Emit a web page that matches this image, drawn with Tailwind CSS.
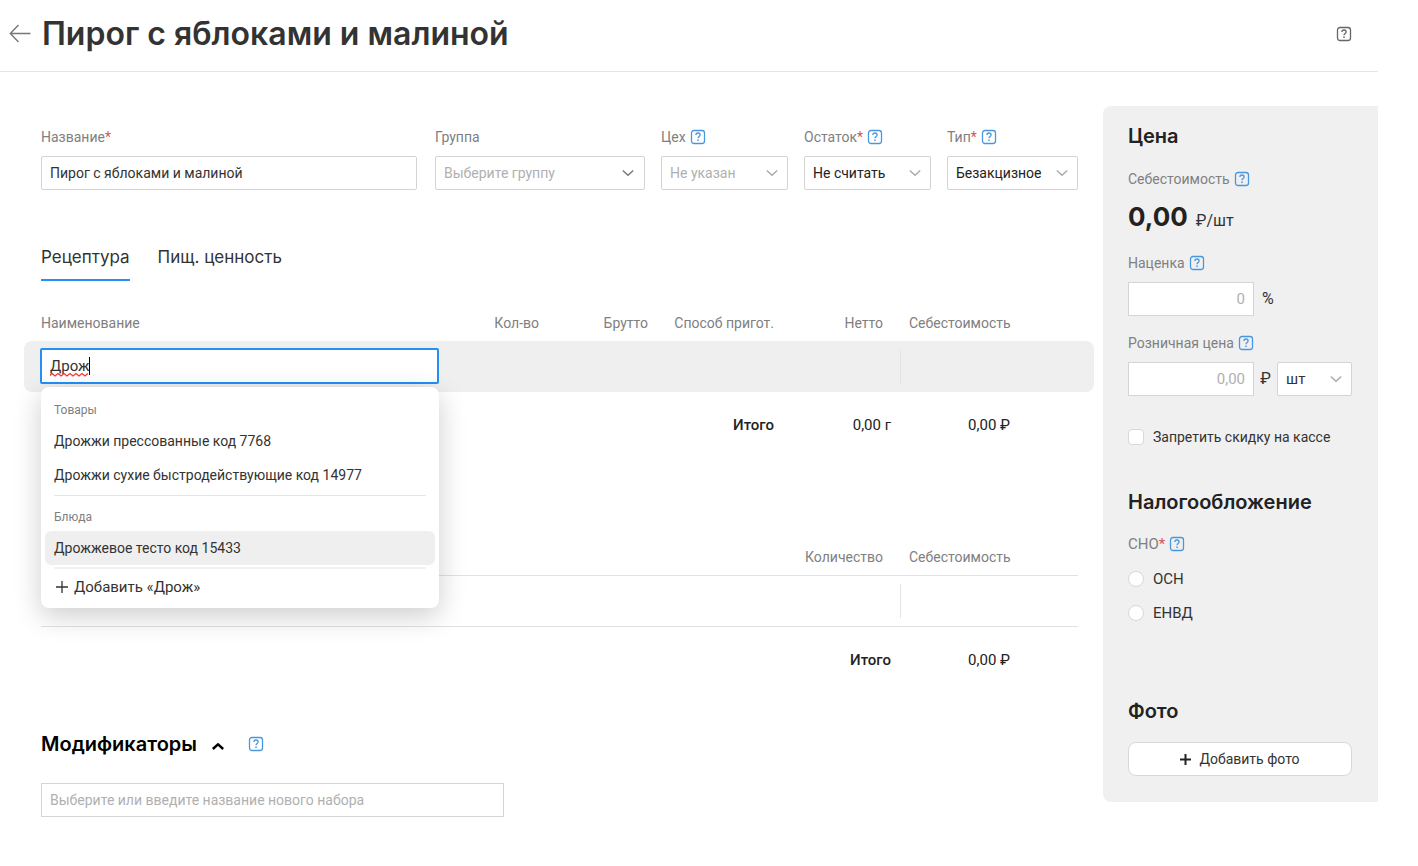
<!DOCTYPE html>
<html lang="ru">
<head>
<meta charset="utf-8">
<meta name="viewport" content="width=device-width, initial-scale=1">
<title>Пирог с яблоками и малиной</title>
<script src="https://cdn.jsdelivr.net/npm/@tailwindcss/browser@4"></script>
</head>
<body class="bg-white font-['Roboto',sans-serif] text-[14px] leading-5 text-[#333]">
<svg class="hidden">
  <symbol id="help" viewBox="0 0 16 16" fill="none" stroke="currentColor">
    <rect x="1.5" y="1.500" width="13" height="13" rx="2.500" stroke-width="1.300"/>
    <path d="M5.900 6C5.900 4.600 6.800 4 8 4s2.100.700 2.100 1.900c0 1.500-2.100 1.600-2.100 3.300" stroke-width="1.300"/>
    <path d="M8 10.600v1.500" stroke-width="1.500"/>
  </symbol>
  <symbol id="chevron" viewBox="0 0 12 8" fill="none" stroke="currentColor" stroke-width="1.500">
    <path d="M.8 1.500 6 6.200l5.200-4.700"/>
  </symbol>
</svg>

<div class="pr-10">
  <header class="flex h-[72px] items-center border-b border-[#e4e4e4] pr-[26px] pb-1 pl-[9px]">
    <button type="button" aria-label="Назад" class="mr-[11px] text-[#777]">
      <svg class="block h-5 w-[22px]" viewBox="0 0 22 20" fill="none" stroke="currentColor" stroke-width="1.400"><path d="M21.500 9.500H1.500M9.500 1 1.300 9.500l8.200 8.500"/></svg>
    </button>
    <h1 class="flex-1 font-['Inter',sans-serif] text-[32px] leading-10 font-semibold text-[#333]">Пирог с яблоками и малиной</h1>
    <button type="button" aria-label="Справка" class="text-[#666]"><svg class="block size-4"><use href="#help"/></svg></button>
  </header>

  <main class="flex items-start pt-[34px]">
    <div class="min-w-0 flex-1 pt-[21px] pr-[25px] pl-[41px]">
      <div class="flex gap-4">
        <div class="mr-[2px] flex-1">
          <label for="name" class="block text-[#808080]">Название<span class="text-[#d9534f]">*</span></label>
          <input id="name" type="text" value="Пирог с яблоками и малиной" class="mt-[9px] block h-[34px] w-full rounded-[2px] border border-[#d4d4d4] px-2">
        </div>
        <div class="w-[210px]">
          <label for="group" class="block text-[#808080]">Группа</label>
          <div class="relative mt-[9px]">
            <select id="group" class="block h-[34px] w-full appearance-none rounded-[2px] border border-[#d4d4d4] bg-white px-2 text-[#b0b0b0]"><option>Выберите группу</option></select>
            <svg class="pointer-events-none absolute top-[13px] right-[11px] h-2 w-3 text-[#777]"><use href="#chevron"/></svg>
          </div>
        </div>
        <div class="w-[127px]">
          <div class="flex items-center gap-1"><label for="shop" class="text-[#808080]">Цех</label><button type="button" aria-label="О поле «Цех»" class="text-[#4a97e0]"><svg class="block size-4"><use href="#help"/></svg></button></div>
          <div class="relative mt-[9px]">
            <select id="shop" class="block h-[34px] w-full appearance-none rounded-[2px] border border-[#d4d4d4] bg-white px-2 text-[#b0b0b0]"><option>Не указан</option></select>
            <svg class="pointer-events-none absolute top-[13px] right-[10px] h-2 w-3 text-[#aaa]"><use href="#chevron"/></svg>
          </div>
        </div>
        <div class="w-[127px]">
          <div class="flex items-center gap-1"><label for="rest" class="text-[#808080]">Остаток<span class="text-[#d9534f]">*</span></label><button type="button" aria-label="О поле «Остаток»" class="text-[#4a97e0]"><svg class="block size-4"><use href="#help"/></svg></button></div>
          <div class="relative mt-[9px]">
            <select id="rest" class="block h-[34px] w-full appearance-none rounded-[2px] border border-[#d4d4d4] bg-white px-2 text-[#222]"><option>Не считать</option></select>
            <svg class="pointer-events-none absolute top-[13px] right-[10px] h-2 w-3 text-[#aaa]"><use href="#chevron"/></svg>
          </div>
        </div>
        <div class="w-[131px]">
          <div class="flex items-center gap-1"><label for="type" class="text-[#808080]">Тип<span class="text-[#d9534f]">*</span></label><button type="button" aria-label="О поле «Тип»" class="text-[#4a97e0]"><svg class="block size-4"><use href="#help"/></svg></button></div>
          <div class="relative mt-[9px]">
            <select id="type" class="block h-[34px] w-full appearance-none rounded-[2px] border border-[#d4d4d4] bg-white px-2 text-[#222]"><option>Безакцизное</option></select>
            <svg class="pointer-events-none absolute top-[13px] right-[10px] h-2 w-3 text-[#aaa]"><use href="#chevron"/></svg>
          </div>
        </div>
      </div>

      <nav class="mt-[54px] flex gap-7 font-['Inter',sans-serif] text-[17px] leading-[26px]">
        <a href="#recipe" class="border-b-2 border-[#2290f5] pb-[9px]">Рецептура</a>
        <a href="#nutrition" class="pb-[9px]">Пищ. ценность</a>
      </nav>

      <div id="recipe" class="-mr-4 -ml-[17px] pt-7">
        <table class="w-full table-fixed border-separate border-spacing-0 text-right">
          <colgroup><col><col class="w-[109px]"><col class="w-[109px]"><col class="w-[126px]"><col class="w-[117px]"><col class="w-[194px]"></colgroup>
          <thead>
            <tr class="text-[#808080]">
              <th class="pt-1 pb-2 pl-[17px] text-left font-normal">Наименование</th>
              <th class="pt-1 pr-[9px] pb-2 font-normal">Кол-во</th>
              <th class="pt-1 pr-[9px] pb-2 font-normal">Брутто</th>
              <th class="pt-1 pr-[9px] pb-2 font-normal">Способ пригот.</th>
              <th class="pt-1 pr-[17px] pb-2 font-normal">Нетто</th>
              <th class="pt-1 pb-2 pl-[9px] text-left font-normal">Себестоимость</th>
            </tr>
          </thead>
          <tbody>
            <tr class="bg-[#efefef]">
              <td class="h-[51px] rounded-l-lg pt-[7px] pl-4 text-left align-top">
                <div class="relative">
                  <input type="text" value="Дрож" aria-label="Наименование" spellcheck="false" class="block h-9 w-full rounded-[2px] border-2 border-[#2290f5] bg-white px-2 text-[15px]">
                  <svg class="pointer-events-none absolute top-6 left-[10px] h-[5px] w-[38px]" viewBox="0 0 38 5" fill="none" stroke="#f33" stroke-width="1.300"><path d="M0 3.500l2-2 3 2.500 3-2.500 3 2.500 3-2.500 3 2.500 3-2.500 3 2.500 3-2.500 3 2.500 3-2.500 3 2.500 3-2.500"/></svg>
                  <span class="absolute top-[9px] left-[49px] h-[18px] w-px bg-black"></span>

                  <div class="absolute inset-x-0 top-full z-10 mt-[3px] ml-px rounded-lg bg-white pt-3 pb-1 shadow-[0_8px_28px_rgba(0,0,0,0.2)]">
                    <div class="mb-[3px] px-[13px] text-xs leading-[22px] text-[#808080]">Товары</div>
                    <button type="button" class="block h-[34px] w-full px-[13px] text-left">Дрожжи прессованные код 7768</button>
                    <button type="button" class="block h-[34px] w-full px-[13px] text-left">Дрожжи сухие быстродействующие код 14977</button>
                    <hr class="mx-[13px] mt-[3px] border-[#e4e4e4]">
                    <div class="mt-[10px] mb-[3px] px-[13px] text-xs leading-[22px] text-[#808080]">Блюда</div>
                    <div class="px-1"><button type="button" class="block h-[34px] w-full rounded-md bg-[#efefef] px-[9px] text-left">Дрожжевое тесто код 15433</button></div>
                    <hr class="mx-[13px] mt-[2px] border-t-2 border-[#f1f1f1]">
                    <button type="button" class="flex h-[35px] w-full items-center gap-[6px] px-[15px] text-[15px]"><svg class="size-3" viewBox="0 0 12 12" stroke="currentColor" stroke-width="1.300"><path d="M6 0v12M0 6h12"/></svg>Добавить «Дрож»</button>
                  </div>
                </div>
              </td>
              <td></td><td></td><td></td><td></td>
              <td class="rounded-r-lg"><div class="h-[34px] border-l border-[#e4e4e4]"></div></td>
            </tr>
            <tr class="text-[15px] text-[#222]">
              <td class="h-[66px]"></td><td></td><td></td>
              <td class="pr-[9px] font-medium">Итого</td>
              <td class="pr-[9px]">0,00 г</td>
              <td class="pr-[84px]">0,00 ₽</td>
            </tr>
          </tbody>
        </table>
      </div>

      <table class="mt-[85px] w-full table-fixed border-separate border-spacing-0 text-right">
        <colgroup><col><col class="w-[126px]"><col class="w-[178px]"></colgroup>
        <thead>
          <tr class="text-[#808080]">
            <td></td>
            <th class="pt-1 pr-[17px] pb-2 font-normal">Количество</th>
            <th class="pt-1 pb-2 pl-[9px] text-left font-normal">Себестоимость</th>
          </tr>
        </thead>
        <tbody>
          <tr>
            <td class="h-[52px] border-y border-[#e2e2e2]"></td>
            <td class="border-y border-[#e2e2e2]"></td>
            <td class="border-y border-[#e2e2e2]"><div class="h-[34px] border-l border-[#e4e4e4]"></div></td>
          </tr>
          <tr class="text-[15px] text-[#222]">
            <td class="h-[66px]"></td>
            <td class="pr-[9px] font-medium">Итого</td>
            <td class="pr-[68px]">0,00 ₽</td>
          </tr>
        </tbody>
      </table>

      <section class="pt-[37px]">
        <div class="flex items-center">
          <h2 class="font-['Inter',sans-serif] text-xl leading-7 font-semibold text-black"><label for="modifiers">Модификаторы</label></h2>
          <button type="button" aria-label="Свернуть" class="ml-[15px] pt-1 text-black"><svg class="block h-2 w-3" viewBox="0 0 12 8" fill="none" stroke="currentColor" stroke-width="2.400"><path d="M.8 7 6 2.300 11.200 7"/></svg></button>
          <button type="button" aria-label="О модификаторах" class="ml-6 text-[#4a97e0]"><svg class="block size-4"><use href="#help"/></svg></button>
        </div>
        <input id="modifiers" type="text" placeholder="Выберите или введите название нового набора" class="mt-[25px] block h-[34px] w-[463px] border border-[#d4d4d4] px-2 placeholder:text-[#b0b0b0]">
      </section>
    </div>

    <aside class="w-[275px] shrink-0 rounded-l-lg bg-[#f0f0f0] pt-4 pr-[26px] pb-[26px] pl-[25px]">
      <h2 class="font-['Inter',sans-serif] text-xl leading-7 font-semibold text-[#222]">Цена</h2>
      <div class="mt-[19px] flex items-center gap-1 text-[#808080]">Себестоимость<button type="button" aria-label="О себестоимости" class="text-[#4a97e0]"><svg class="block size-4"><use href="#help"/></svg></button></div>
      <div class="mt-3 flex h-8 items-baseline gap-2 leading-8"><strong class="font-['Inter',sans-serif] text-[26px] font-bold text-[#222]">0,00</strong><span class="text-base leading-8">₽/шт</span></div>
      <div class="mt-5 flex items-center gap-1"><label for="markup" class="text-[#808080]">Наценка</label><button type="button" aria-label="О наценке" class="text-[#4a97e0]"><svg class="block size-4"><use href="#help"/></svg></button></div>
      <div class="mt-[9px] flex items-center gap-2"><input id="markup" type="text" placeholder="0" class="h-[34px] w-[126px] border border-[#d4d4d4] bg-white px-2 text-right text-[15px] placeholder:text-[#b0b0b0]"><span class="text-base">%</span></div>
      <div class="mt-[17px] flex items-center gap-1"><label for="price" class="text-[#808080]">Розничная цена</label><button type="button" aria-label="О розничной цене" class="text-[#4a97e0]"><svg class="block size-4"><use href="#help"/></svg></button></div>
      <div class="mt-[9px] flex items-center justify-between">
        <input id="price" type="text" placeholder="0,00" class="h-[34px] w-[126px] border border-[#d4d4d4] bg-white px-2 text-right text-[15px] placeholder:text-[#b0b0b0]">
        <span class="text-base">₽</span>
        <div class="relative w-[75px]">
          <select aria-label="Единица" class="block h-[34px] w-full appearance-none rounded-[2px] border border-[#d4d4d4] bg-white px-2 text-[15px]"><option>шт</option></select>
          <svg class="pointer-events-none absolute top-[13px] right-[10px] h-2 w-3 text-[#aaa]"><use href="#chevron"/></svg>
        </div>
      </div>
      <label class="mt-[31px] flex items-center gap-[9px]"><input type="checkbox" class="size-4 appearance-none rounded-[4px] border border-[#d8d8d8] bg-white">Запретить скидку на кассе</label>

      <h2 class="mt-[41px] font-['Inter',sans-serif] text-xl leading-7 font-semibold text-[#222]">Налогообложение</h2>
      <fieldset class="mt-[18px] text-[15px]">
        <legend class="flex items-center gap-1 text-[#808080]"><span>СНО<span class="text-[#d9534f]">*</span></span><button type="button" aria-label="Об СНО" class="text-[#4a97e0]"><svg class="block size-4"><use href="#help"/></svg></button></legend>
        <label class="mt-[15px] flex items-center gap-[9px]"><input type="radio" name="tax" class="size-4 appearance-none rounded-full border border-[#d8d8d8] bg-white">ОСН</label>
        <label class="mt-[14px] flex items-center gap-[9px]"><input type="radio" name="tax" class="size-4 appearance-none rounded-full border border-[#d8d8d8] bg-white">ЕНВД</label>
      </fieldset>

      <h2 class="mt-[74px] font-['Inter',sans-serif] text-xl leading-7 font-semibold text-[#222]">Фото</h2>
      <button type="button" class="mt-[17px] flex h-[34px] w-full items-center justify-center gap-2 rounded-lg border border-[#d8d8d8] bg-white"><svg class="size-[11px]" viewBox="0 0 11 11" stroke="#222" stroke-width="2"><path d="M5.500 0v11M0 5.500h11"/></svg>Добавить фото</button>
    </aside>
  </main>
</div>
</body>
</html>
